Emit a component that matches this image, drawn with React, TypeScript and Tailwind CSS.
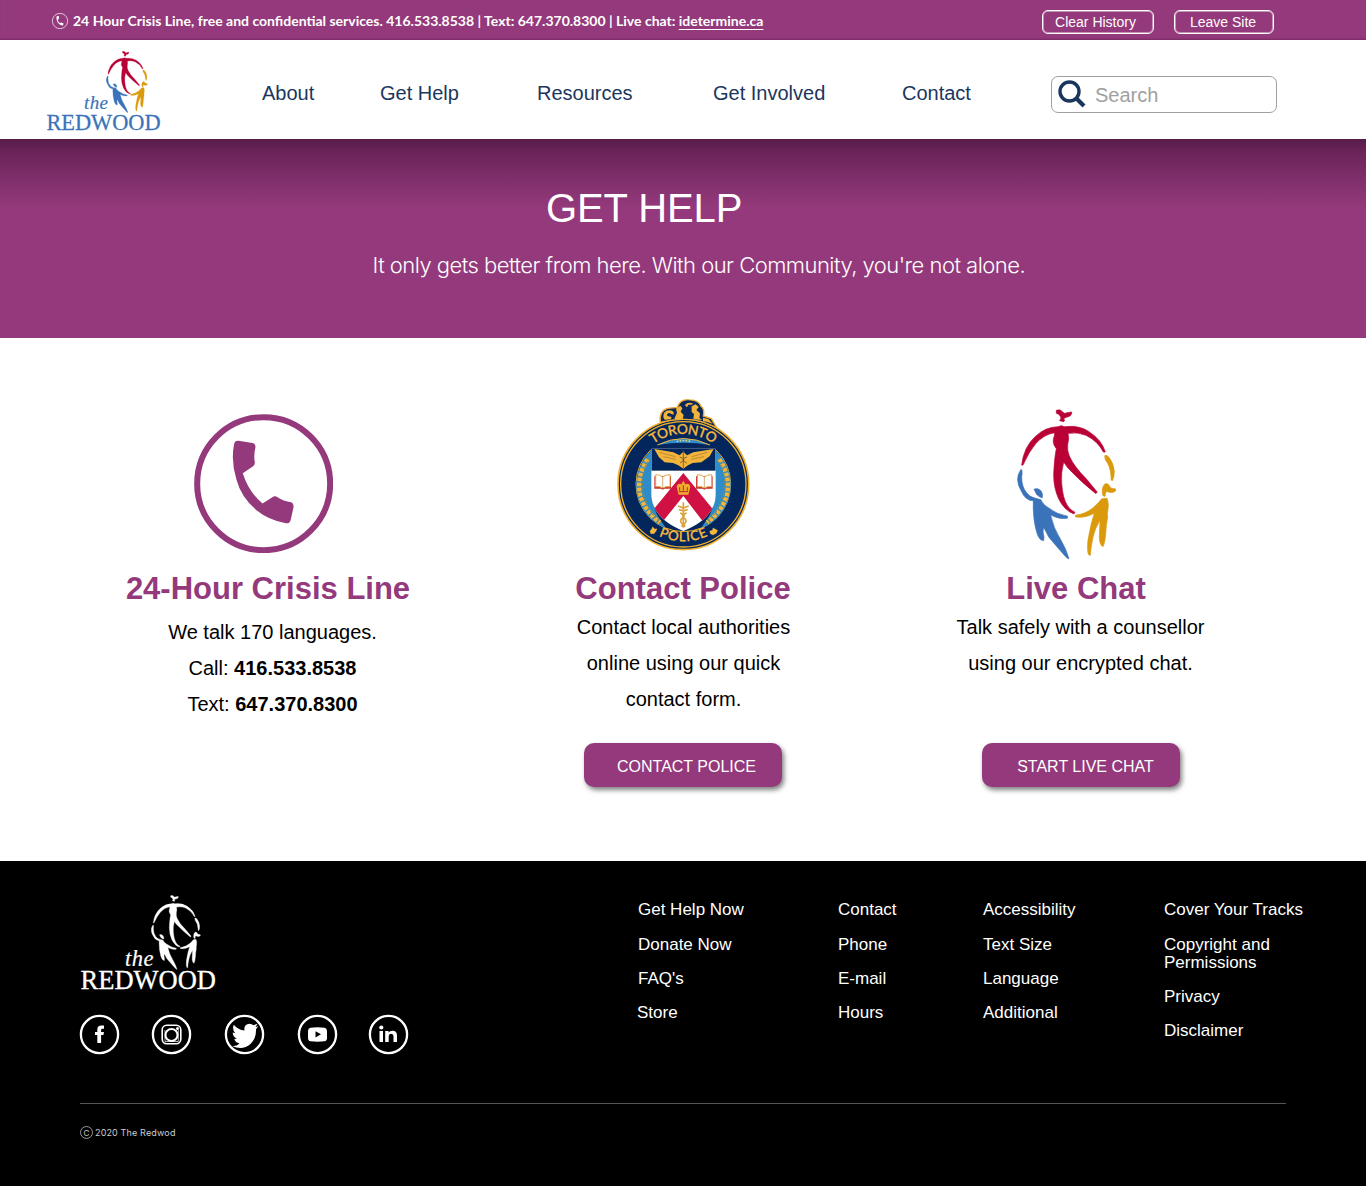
import React from "react";

const SANS = "font-['Liberation_Sans',Arial,sans-serif]";

type MarkColors = { red: string; blue: string; gold: string };
const FULL: MarkColors = { red: "#b90135", blue: "#3b73ba", gold: "#da9a0c" };
const WHITE: MarkColors = { red: "#fff", blue: "#fff", gold: "#fff" };

function Mark({ colors, className }: { colors: MarkColors; className: string }) {
  return (
    <svg viewBox="50 28 300 452" preserveAspectRatio="none" className={className} aria-hidden="true">
      <g fill={colors.red} stroke={colors.red} strokeWidth="2">
        <path d="M168 32 Q180 27 187 37 Q192 44 200 39 L214 37 Q215 48 204 51 Q196 52 190 57 Q195 63 190 66 L178 63 Q184 56 180 50 Q176 42 168 41Z" />
        <path d="M64 196 Q70 142 105 110 Q135 82 172 81 L183 78 L193 81 Q235 76 265 95 Q305 121 315 157 L309 157 Q293 125 258 107 Q232 96 203 101 Q207 116 202 135 Q200 152 207 169 Q222 202 257 236 L291 277 L286 281 Q245 248 215 217 Q201 205 190 187 Q181 220 184 250 Q187 295 201 317 Q211 332 224 337 L221 342 Q192 332 175 297 Q160 265 160 225 Q162 175 168 147 Q153 129 162 109 L163 99 Q130 104 106 132 Q85 157 68 196Z" />
      </g>
      <g fill={colors.blue} stroke={colors.blue} strokeWidth="2">
        <path d="M63 209 Q67 212 64 232 Q64 260 79 279 Q88 291 101 294 L122 300 Q126 313 143 323 Q170 344 202 349 L201 355 Q177 359 151 345 Q159 384 181 419 Q198 448 206 476 Q202 477 196 470 Q163 433 145 411 L130 382 Q126 394 131 411 L130 422 Q117 423 109 397 Q97 355 99 303 Q75 303 62 272 Q42 239 61 210Z" />
        <path d="M101 268 Q112 263 122 273 Q129 283 126 294 Q117 292 109 284Z" />
      </g>
      <g fill={colors.gold} stroke={colors.gold} strokeWidth="2">
        <path d="M313 168 Q320 163 327 174 Q340 191 342 215 Q342 233 336 243 Q331 243 332 229 Q330 198 315 180Z" />
        <path d="M306 283 Q304 256 317 251 Q325 251 328 260 Q332 267 345 267 Q350 273 340 277 Q326 280 320 274 Q313 279 315 288 Q311 294 306 283Z" />
        <path d="M225 346 Q258 342 280 322 Q295 310 304 297 L320 295 Q326 310 323 329 Q320 341 322 351 Q317 378 316 403 Q313 432 308 440 Q298 435 297 414 L299 361 Q283 388 278 412 Q272 437 270 466 Q263 468 262 451 Q260 426 267 399 Q272 369 282 340 Q252 356 226 351Z" />
      </g>
    </svg>
  );
}

function Wordmark({ color, className }: { color: string; className: string }) {
  return (
    <svg viewBox="0 -8 140 60" preserveAspectRatio="none" className={className} fill={color} fontFamily="'Liberation Serif', serif">
      <text x="45" y="16.500" fontSize="22.500" fontStyle="italic" textLength="28.500" stroke={color} strokeWidth="0.200">the</text>
      <text x="0.500" y="40" fontSize="26.500" textLength="135.500" lengthAdjust="spacingAndGlyphs" stroke={color} strokeWidth="0.300">REDWOOD</text>
    </svg>
  );
}

function Handset({ className }: { className: string }) {
  return (
    <svg viewBox="42 42 416 416" className={className} aria-hidden="true">
      <circle cx="250.500" cy="250.500" r="199" fill="none" stroke="currentColor" strokeWidth="18" />
      <path fill="currentColor" d="M162 132Q164 121 175 122L217 129Q226 131 226 141Q220 167 224 186Q225 194 218 199L188 219Q205 274 247 310L280 289Q286 286 292 291Q309 303 333 306Q341 310 340 320L331 361Q328 371 317 369Q265 359 228 329Q183 291 169 238Q152 186 162 132Z" />
    </svg>
  );
}

function Laurel() {
  return (
    <g>
      <path d="M154 181Q97 239 112 318Q132 389 198 415L183 392Q159 363 157 315Z" fill="#2e8dc8" />
      <path d="M143 208Q108 258 121 318Q138 368 180 397" fill="none" stroke="#f3b43c" strokeWidth="13" strokeDasharray="11 4" />
      <path d="M148 206Q117 258 131 318Q147 368 186 401" fill="none" stroke="#8d8a55" strokeWidth="5" strokeDasharray="5 6" />
    </g>
  );
}

function Book({ x }: { x: number }) {
  return (
    <g transform={`translate(${x} 254)`}>
      <path d="M0 5H50V42H30L25 45L20 42H0Z" fill="#c5352f" />
      <path d="M4 0Q17 0 25 7Q34 0 47 0V36Q34 34 25 40Q17 34 4 36Z" fill="#fff" stroke="#e6a443" strokeWidth="3" />
      <path d="M25 7V39" stroke="#b88936" strokeWidth="2" />
    </g>
  );
}

function PoliceBadge({ className }: { className: string }) {
  return (
    <svg viewBox="0 0 498 510" className={className} role="img" aria-label="Toronto Police">
      <defs>
        <path id="arcTop" d="M99 283A151 151 0 0 1 401 283" />
        <path id="arcBottom" d="M79 283A171 171 0 0 0 421 283" />
        <clipPath id="shield">
          <path d="M154 176H347V315Q345 385 250 423Q157 385 154 315Z" />
        </clipPath>
      </defs>
      <circle cx="250" cy="283" r="196" fill="#03265c" stroke="#f3b02b" strokeWidth="5" />
      <path d="M181 97Q176 62 203 55L232 52Q240 28 265 29Q296 29 303 49Q315 58 310 78L334 86L350 113Q300 87 250 88Q214 88 181 97Z" fill="#0b285b" stroke="#f0ac2d" strokeWidth="4" />
      <g fill="#f3b43c">
        <path d="M190 82Q188 62 209 61Q225 63 220 74L208 69Q199 70 202 78L215 81L212 88L194 89Z" />
        <path d="M223 86L231 68L228 56L241 47L247 55L242 65L251 75L248 87L237 87L232 89Z" />
        <path d="M255 46Q258 38 270 38L280 41L274 44L265 44L261 52Z" />
        <path d="M275 49L287 43L296 51L289 60L300 70L298 84L307 90L280 88L282 72L275 66Z" />
        <path d="M309 83L325 87L338 101L320 95L309 94Z" />
      </g>
      <circle cx="250" cy="283" r="188" fill="none" stroke="#f3b02b" strokeWidth="4" />
      <path d="M152 180A142 142 0 1 0 348 180" fill="none" stroke="#f3b02b" strokeWidth="3" />
      <path d="M172 165Q250 126 330 165Q250 151 172 165Z" fill="#2e8dc8" />
      <path d="M172 165Q250 126 330 165" fill="none" stroke="#f3b43c" strokeWidth="3" />
      <path d="M230 154Q250 150 272 154" fill="none" stroke="#f3d27c" strokeWidth="4" strokeDasharray="5 4" />
      <Laurel />
      <g transform="translate(501 0) scale(-1 1)">
        <Laurel />
      </g>
      <path d="M154 176H347V315Q345 385 250 423Q157 385 154 315Z" fill="#fff" />
      <g clipPath="url(#shield)">
        <rect x="150" y="170" width="200" height="72" fill="#03265c" />
        <path d="M250 249L352 374L317 405L250 318L180 405L148 374Z" fill="#cf1143" />
      </g>
      <path d="M163 177L220 187L239 196L250 185L261 196L280 187L341 177L329 199L304 217L278 219L264 226L250 236L235 226L219 219L194 217L177 202Z" fill="#f3b43c" />
      <path d="M178 187L226 200M190 200L227 208M322 187L275 200M312 200L273 208" stroke="#9b7433" strokeWidth="2" />
      <path d="M250 181V234M239 201Q263 207 240 219M261 201Q237 207 260 219" fill="none" stroke="#6d582f" strokeWidth="2.500" />
      <Book x={163} />
      <Book x={288} />
      <path d="M236 314L230 290Q232 278 244 283L250 272L256 283Q269 278 271 290L265 314Z" fill="#f0ac2d" />
      <path d="M237 305H264M239 292V302M250 286V302M262 292V302" stroke="#b62335" strokeWidth="3" />
      <path d="M250 337V413M234 348L250 354L266 348M237 359L250 363L263 359M240 369Q262 378 244 387Q237 398 256 409M260 369Q238 378 256 387Q263 398 244 409" fill="none" stroke="#d9a43d" strokeWidth="5" />
      <g fill="#f7b93b" stroke="#f7b93b" strokeWidth="0.800" fontFamily="Lato, sans-serif" fontWeight="500">
        <text fontSize="41">
          <textPath href="#arcTop" startOffset="50%" textAnchor="middle" textLength="192">TORONTO</textPath>
        </text>
        <text fontSize="40">
          <textPath href="#arcBottom" startOffset="50%" textAnchor="middle" textLength="152">POLICE</textPath>
        </text>
        <path d="M150 423L155 417L158 410L164 417L171 416L168 424L162 431L152 431Z" />
        <path d="M329 423L337 421L339 414L345 417L353 421L349 430L339 435L331 431Z" />
      </g>
    </svg>
  );
}

function Social({ label, className, children }: { label: string; className: string; children: React.ReactNode }) {
  return (
    <a href="#" aria-label={label} className={className}>
      <svg viewBox="0.5 0.5 40 40" className="size-10 overflow-visible" fill="#fff">
        <circle cx="20" cy="20" r="18.600" fill="none" stroke="#fff" strokeWidth="2.300" />
        {children}
      </svg>
    </a>
  );
}

function FooterColumn({ items, className }: { items: string[]; className: string }) {
  return (
    <ul className={className}>
      {items.map((t, i) => (
        <li key={t} className={i === 0 ? "mb-[17px]" : "mb-4"}>{t}</li>
      ))}
    </ul>
  );
}

export default function App() {
  return (
    <div className={`w-[1366px] bg-white text-black ${SANS}`}>
      <div className="flex h-10 items-start bg-[#94397b] text-white shadow-[inset_0_-2px_2px_-1px_rgba(60,10,50,0.3)]">
        <Handset className="mt-[13px] ml-[52px] size-4" />
        <p className="mt-[11px] ml-[5px] w-[700px] whitespace-nowrap font-[Lato,sans-serif] text-[14px] leading-5 font-bold">
          24 Hour Crisis Line, free and confidential services. 416.533.8538 | Text: 647.370.8300 | Live chat:{" "}
          <a href="#" className="underline underline-offset-[3px]">idetermine.ca</a>
        </p>
        <button className="mt-[10px] ml-[269px] h-6 w-28 rounded-md border border-white pt-px pr-[5px] text-[14px] leading-[21px] shadow-[inset_0_0_0_1px_rgba(255,255,255,0.45)]">Clear History</button>
        <button className="mt-[10px] ml-5 h-6 w-[100px] rounded-md border border-white pt-px pr-[2px] text-[14px] leading-[21px] shadow-[inset_0_0_0_1px_rgba(255,255,255,0.45)]">Leave Site</button>
      </div>

      <header className="flex h-[99px] items-start text-[20px] leading-6 text-[#1b365d]">
        <div className="ml-[46px] h-[99px] w-[216px] pt-[11px]">
          <Mark colors={FULL} className="ml-[60px] h-[62px] w-[42px]" />
          <Wordmark color="#3b73ba" className="-mt-[25px] h-[52px] w-[118px]" />
        </div>
        <nav className="mt-[41px] flex w-[789px]">
          <a href="#" className="w-[118px]">About</a>
          <a href="#" className="w-[157px]">Get Help</a>
          <a href="#" className="w-[176px]">Resources</a>
          <a href="#" className="w-[189px]">Get Involved</a>
          <a href="#">Contact</a>
        </nav>
        <div className="mt-9 flex h-[37px] w-[226px] rounded-[7px] border border-[#a0a0a0] text-[#a0a0a0]">
          <svg viewBox="0 0 28 28" className="mt-[3px] ml-[6px] size-7" fill="none" stroke="#1b365d">
            <circle cx="11.500" cy="11.500" r="9.500" strokeWidth="3.400" />
            <path d="M17.500 17.500L26 26" strokeWidth="4.200" />
          </svg>
          <span className="mt-[6px] ml-[9px]">Search</span>
        </div>
      </header>

      <section className="h-[199px] bg-[linear-gradient(#561c48_0px,#6b2559_14px,#7d2e69_38px,#94397b_68px)] pt-[46px] text-white">
        <h1 className="ml-[546px] text-[40px] leading-[46px] tracking-[-0.1px]">GET HELP</h1>
        <p className="mt-5 ml-[372.5px] whitespace-nowrap font-[Inter,sans-serif] text-[22px] leading-7 font-light tracking-[-0.53px]">
          It only gets better from here. With our Community, you're not alone.
        </p>
      </section>

      <main className="flex h-[523px] pt-[52px] text-center text-[20px] leading-9">
        <article className="ml-[88px] flex w-[360px] flex-col items-center">
          <div className="h-[175px] pt-6 pr-[9px] text-[#94397b]">
            <Handset className="size-[139px]" />
          </div>
          <h2 className="mt-[6px] text-[31px] font-bold text-[#94397b]">24-Hour Crisis Line</h2>
          <p className="mt-[7px] pl-[9px]">
            We talk 170 languages.<br />
            Call: <b>416.533.8538</b><br />
            Text: <b>647.370.8300</b>
          </p>
        </article>
        <article className="ml-[55px] flex w-[360px] flex-col items-center">
          <PoliceBadge className="h-[170px] w-[166px]" />
          <h2 className="mt-[11px] text-[31px] font-bold text-[#94397b]">Contact Police</h2>
          <p className="mt-[2px] h-[108px] pl-px">
            Contact local authorities<br />online using our quick<br />contact form.
          </p>
          <button className="mt-[26px] h-11 w-[198px] rounded-[10px] bg-[#94397b] pt-[3px] pl-[7px] text-[16px] leading-5 text-white shadow-[2px_3px_5px_rgba(0,0,0,0.5)]">CONTACT POLICE</button>
        </article>
        <article className="ml-[33px] flex w-[360px] flex-col items-center">
          <div className="h-[170px] pt-[19px] pr-[19px]">
            <Mark colors={FULL} className="h-[151px] w-[100px]" />
          </div>
          <h2 className="mt-[11px] text-[31px] font-bold text-[#94397b]">Live Chat</h2>
          <p className="mt-[2px] h-[108px] pl-[9px]">
            Talk safely with a counsellor<br />using our encrypted chat.
          </p>
          <button className="mt-[26px] ml-[10px] h-11 w-[198px] rounded-[10px] bg-[#94397b] pt-[3px] pl-[9px] text-[16px] leading-5 text-white shadow-[2px_3px_5px_rgba(0,0,0,0.5)]">START LIVE CHAT</button>
        </article>
      </main>

      <footer className="h-[325px] bg-black pt-[34px] text-white">
        <div className="flex h-[208px]">
          <div className="ml-20 w-[558px]">
            <Mark colors={WHITE} className="ml-[71px] h-[75px] w-[50px]" />
            <Wordmark color="#fff" className="-mt-[29px] h-[60px] w-[140px]" />
            <div className="mt-[14px] flex">
              <Social label="Facebook" className="w-[72px]">
                <path d="M17.800 28.500V20.600H15.500V17.400H17.800V15.200Q17.800 11 22 11H24.500V14.300H22.900Q21.600 14.300 21.600 15.500V17.400H24.400L24 20.600H21.600V28.500Z" />
              </Social>
              <Social label="Instagram" className="w-[73px]">
                <g fill="none" stroke="#fff">
                  <rect x="10.700" y="10.700" width="18.600" height="18.600" rx="4.500" strokeWidth="1.600" />
                  <circle cx="20" cy="20.500" r="6" strokeWidth="2" />
                  <path d="M13.500 15.500V27H26.800V15.500" strokeWidth="0.700" />
                </g>
                <circle cx="26" cy="14" r="1.500" />
              </Social>
              <Social label="Twitter" className="w-[73px]">
                <path d="M7.500 31.500Q12 32 15 29Q10.800 28 9.800 24.500L12.300 24.300Q8.300 22.200 8.200 18L10.800 18.700Q7.300 15 9.300 10.300Q13.600 15.600 20 16.100Q19 9.600 25 9.200Q27.200 9.200 29 10.700L33 9.200L31 12.500L33.800 11.800L31.600 14.500Q31.800 24 26 29.500Q18 36.500 7.500 31.500Z" />
              </Social>
              <Social label="YouTube" className="w-[71px]">
                <path fillRule="evenodd" d="M13 13.200Q20 12.300 27 13.200Q29.500 13.700 29.500 16.500V23.500Q29.500 26.500 27 26.800Q20 27.500 13 26.800Q10.500 26.500 10.500 23.500V16.500Q10.500 13.700 13 13.200ZM18 16.700V23L23.500 19.800Z" />
              </Social>
              <Social label="LinkedIn" className="w-10">
                <path d="M11 16.500H14.500V27.500H11ZM16.700 16.500H20V18Q21.300 16.200 24 16.200Q28.500 16.200 28.500 21V27.500H25V21.700Q25 19.200 22.800 19.200Q20.200 19.200 20.200 22V27.500H16.700Z" />
                <circle cx="12.800" cy="13" r="2.100" />
              </Social>
            </div>
          </div>
          <div className="mt-[6px] flex text-[17px] leading-[18px] whitespace-nowrap">
            <FooterColumn className="w-[200px] [&>li:last-child]:-ml-px" items={["Get Help Now", "Donate Now", "FAQ's", "Store"]} />
            <FooterColumn className="w-[145px]" items={["Contact", "Phone", "E-mail", "Hours"]} />
            <FooterColumn className="w-[181px]" items={["Accessibility", "Text Size", "Language", "Additional"]} />
            <FooterColumn className="whitespace-pre-line" items={["Cover Your Tracks", "Copyright and\nPermissions", "Privacy", "Disclaimer"]} />
          </div>
        </div>
        <div className="mr-20 ml-20 flex border-t border-[#555] pt-[22px] font-[Inter,sans-serif] text-[#ccc]">
          <span className="flex size-[13px] items-center justify-center rounded-full border border-[#999] text-[8px] leading-none">C</span>
          <span className="ml-[2px] text-[9px] leading-[13px] tracking-[0.15px]">2020 The Redwod</span>
        </div>
      </footer>
    </div>
  );
}
